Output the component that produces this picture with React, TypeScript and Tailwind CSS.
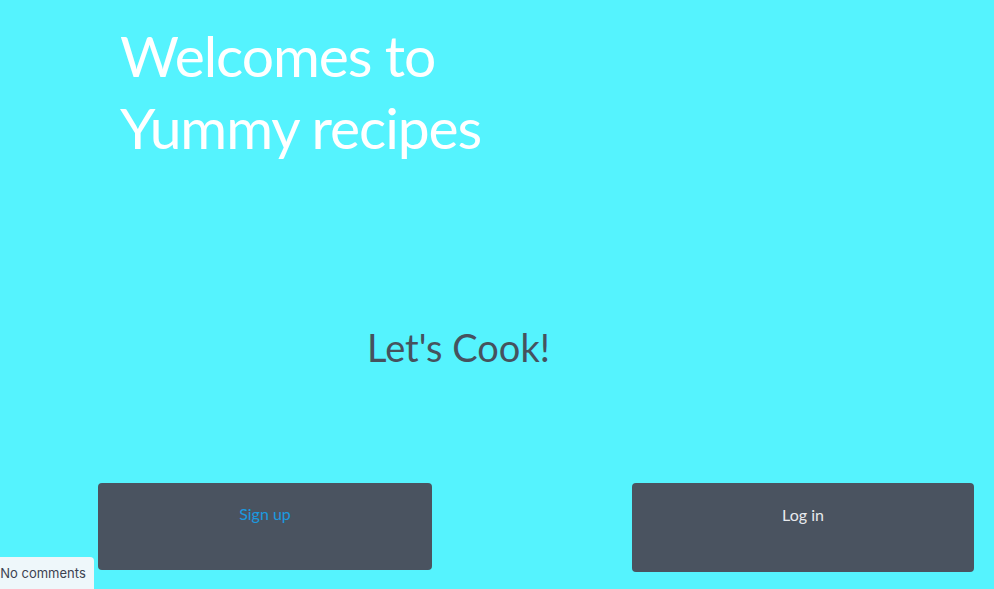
export default function App() {
    return (
        <div className="relative h-[589px] w-full overflow-hidden bg-[#55f3fe] font-['Lato','Liberation_Sans',sans-serif]">
            {/* Heading */}
            <h1 className="pl-[120px] pt-[19px] text-[57px] leading-[72px] font-normal tracking-[-1.1px] text-white">
                Welcomes to
                <br />
                Yummy recipes
            </h1>

            <p className="mt-[162px] pl-[367px] text-[38px] leading-[45px] text-[#46525e]">Let's Cook!</p>

            {/* Actions */}
            <div className="mt-[113px] flex items-start justify-between pl-[98px] pr-[20px]">
                <button className="flex h-[87px] w-[334px] items-start justify-center rounded-[4px] bg-[#4a5360] pt-[19px] text-center text-[16px] leading-[24px] text-[#1a9ae0]">
                    Sign up
                </button>
                <button className="flex h-[89px] w-[342px] items-start justify-center rounded-[4px] bg-[#4a5360] pt-[20px] text-center text-[16px] leading-[24px] text-[#e8eaee]">
                    Log in
                </button>
            </div>

            {/* Floating comments tab */}
            <div className="absolute bottom-0 left-[-8px] flex h-[32px] w-[102px] items-center justify-center rounded-tr-[4px] bg-[#eef7fa] pt-[2px] font-['Inter','Liberation_Sans',sans-serif] text-[13px] text-[#3c4250]">
                No comments
            </div>
        </div>
    );
}
